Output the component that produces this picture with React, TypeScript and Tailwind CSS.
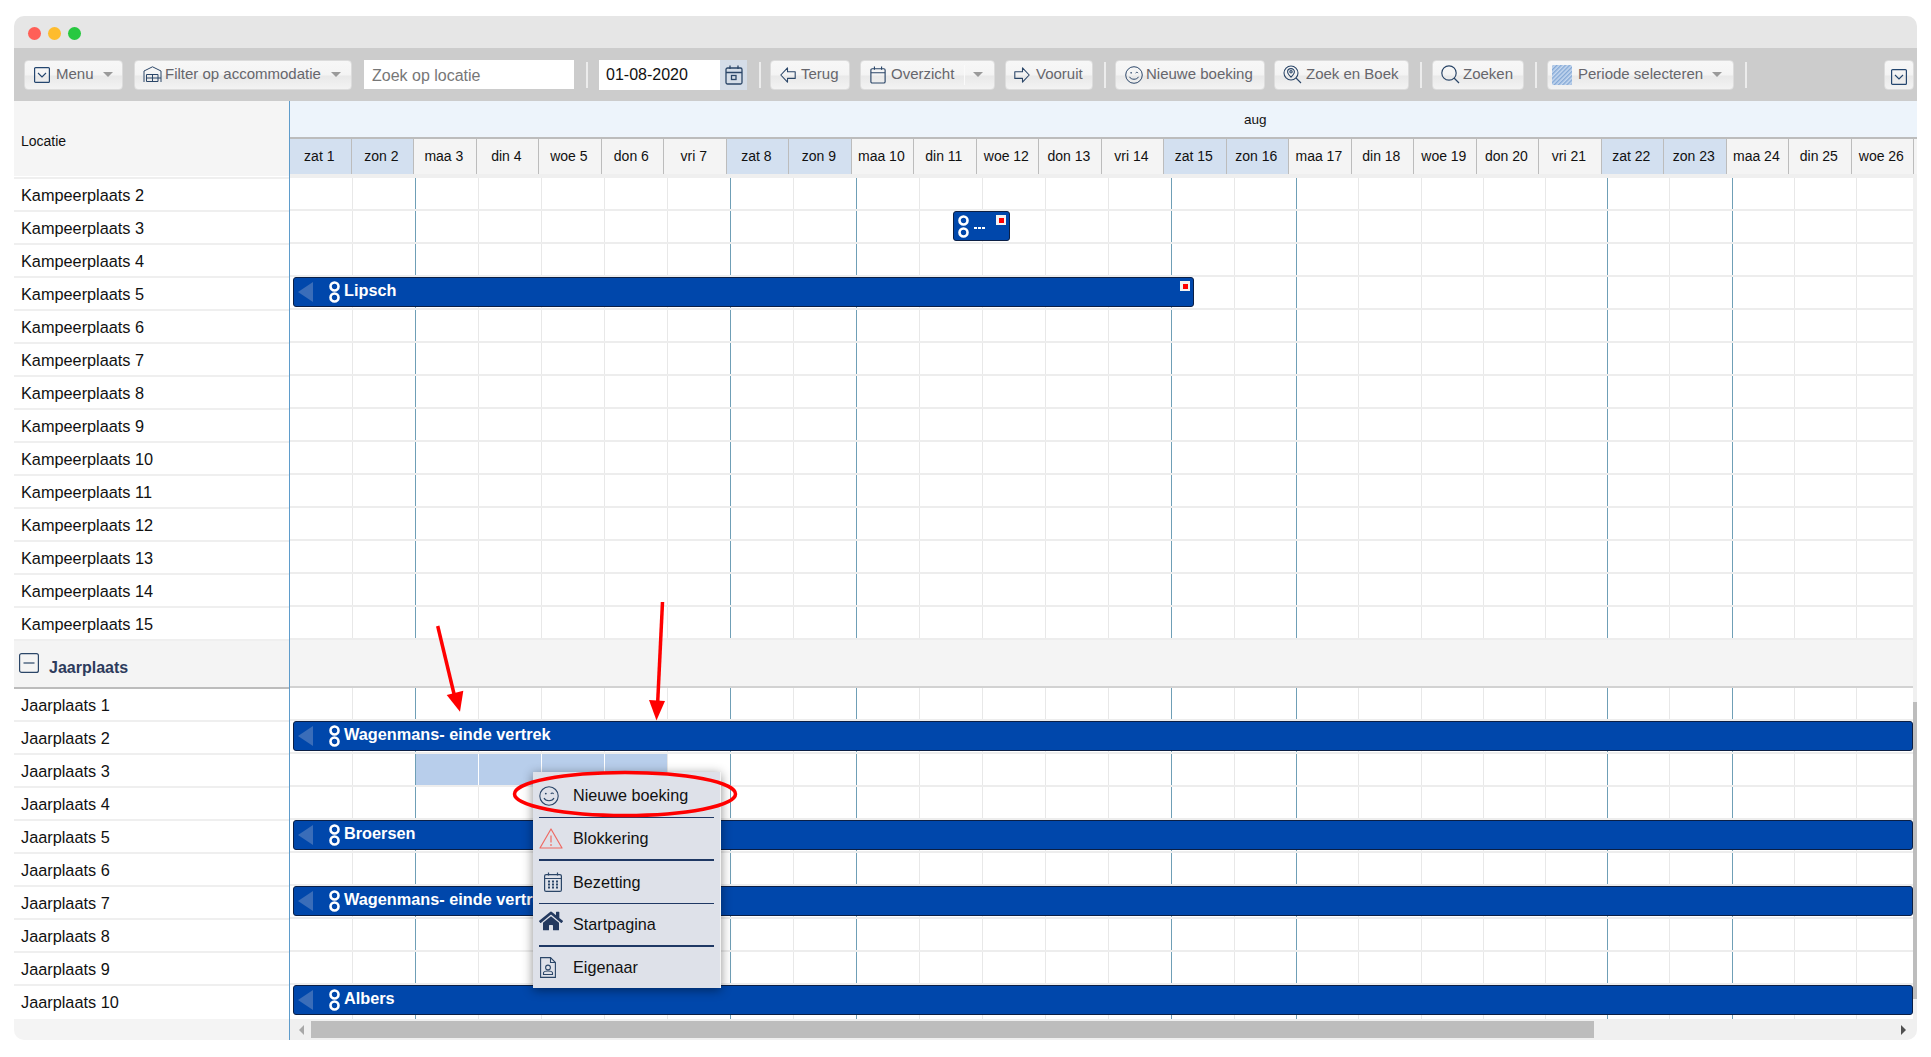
import { ReactNode } from 'react';
import { FaHome } from 'react-icons/fa';

const days = [
  'zat 1', 'zon 2', 'maa 3', 'din 4', 'woe 5', 'don 6', 'vri 7', 'zat 8', 'zon 9', 'maa 10', 'din 11', 'woe 12', 'don 13',
  'vri 14', 'zat 15', 'zon 16', 'maa 17', 'din 18', 'woe 19', 'don 20', 'vri 21', 'zat 22', 'zon 23', 'maa 24', 'din 25', 'woe 26',
];
const weekLines = [1, 6, 8, 13, 15, 20, 22];
const navy = '#2b4668';

const kampeer = Array.from({ length: 14 }, (_, i) => `Kampeerplaats ${i + 2}`);
const jaar = Array.from({ length: 10 }, (_, i) => `Jaarplaats ${i + 1}`);

function Rings({ small }: { small?: boolean }) {
  return (
    <svg width="13" height="25" viewBox="0 0 13 25" className={`shrink-0 ${small ? 'ml-[2px]' : 'ml-[30px]'}`}>
      <circle cx="6.5" cy="6.5" r="4" fill="none" stroke="#fff" strokeWidth="2.6" />
      <circle cx="6.5" cy={small ? 18.5 : 17.5} r="4" fill="none" stroke="#fff" strokeWidth="2.6" />
    </svg>
  );
}

function Marker() {
  return (
    <div className="absolute top-[3px] right-[3px] flex h-[10px] w-[10px] items-center justify-center bg-[#f2f2f2]">
      <div className="h-[5px] w-[5px] bg-[#ff0000]" />
    </div>
  );
}

function Bar({ label, pos, marker }: { label: string; pos: string; marker?: boolean }) {
  return (
    <div className={`absolute top-0 z-10 flex h-[30px] items-center overflow-hidden rounded-[3px] border border-[#0b1f45] bg-[#0047ab] pl-[4px] ${pos}`}>
      <svg width="15" height="20" viewBox="0 0 15 20" className="absolute left-[4px] top-[4px]">
        <path d="M15 0V20L0 10Z" fill="#3a6db9" />
      </svg>
      <Rings />
      <span className="-mt-[3px] ml-[3px] whitespace-nowrap text-[16.3px] font-bold leading-none text-white">{label}</span>
      {marker && <Marker />}
    </div>
  );
}

function GridRow({ selected, last, children }: { selected?: boolean; last?: boolean; children?: ReactNode }) {
  return (
    <div className={`relative grid w-[1630px] grid-cols-[repeat(15,63px)_repeat(11,62.2px)] ${last ? 'h-[34px]' : 'h-[33px] border-b-2 border-[#ededed]'}`}>
      {days.map((d, i) => {
        const isSel = selected && i >= 2 && i <= 5;
        const line = weekLines.includes(i) ? 'border-[#6f9fb6]' : isSel && i < 5 ? 'border-white' : 'border-[#e8e8e8]';
        return <div key={d} className={`border-r ${line} ${isSel ? 'bg-[#b8ceeb]' : ''}`} />;
      })}
      {children}
    </div>
  );
}

function NameRow({ name, last }: { name: string; last?: boolean }) {
  return (
    <div className={`flex h-[33px] items-center pl-[7px] text-[16.3px] text-[#111] ${last ? '' : 'border-b-2 border-[#efefef] pt-[2px]'}`}>
      {name}
    </div>
  );
}

function Btn({ className, children }: { className: string; children: ReactNode }) {
  return (
    <div className={`flex h-[30px] shrink-0 items-center rounded-[4px] border border-[#dcdcdc] bg-[linear-gradient(#f7f7f7_0%,#f4f4f4_48%,#e9e9e9_55%,#f3f3f3_100%)] text-[15px] text-[#66666c] ${className}`}>
      {children}
    </div>
  );
}

function Sep({ className }: { className: string }) {
  return <div className={`h-[26px] w-[2px] shrink-0 bg-[#ececec] ${className}`} />;
}

function Caret({ className }: { className: string }) {
  return (
    <svg width="10" height="5" viewBox="0 0 10 5" className={`shrink-0 ${className}`}>
      <path d="M0 0H10L5 5Z" fill="#9a9a9a" />
    </svg>
  );
}

function ChevronBox({ className }: { className: string }) {
  return (
    <svg width="16" height="16" viewBox="0 0 16 16" fill="none" className={`shrink-0 ${className}`}>
      <rect x="0.6" y="0.6" width="14.8" height="14.8" rx="1" stroke="#24466f" strokeWidth="1.2" />
      <path d="M4 6L8 10L12 6" stroke="#24466f" strokeWidth="1.1" />
    </svg>
  );
}

function CalendarIcon({ size, dot, className }: { size: number; dot?: boolean; className?: string }) {
  return (
    <svg width={size} height={size + 2} viewBox="0 0 18 20" fill="none" stroke={navy} strokeWidth="1.3" className={`shrink-0 ${className ?? ''}`}>
      <rect x="1" y="3" width="16" height="16" rx="1.5" />
      <path d="M1 7.5H17M5 0.5V4M13 0.5V4" />
      {dot && <rect x="6.5" y="10.5" width="4.5" height="4" />}
    </svg>
  );
}

function ArrowIcon({ flip, className }: { flip?: boolean; className?: string }) {
  return (
    <svg width="16" height="16" viewBox="0 0 16 16" fill="none" stroke={navy} strokeWidth="1.1" className={`shrink-0 ${flip ? '-scale-x-100' : ''} ${className ?? ''}`}>
      <path d="M7.5 0.8L0.8 8L7.5 15.2V11.4H15.2V4.8H7.5Z" strokeLinejoin="round" />
    </svg>
  );
}

function Smile({ size, className }: { size: number; className?: string }) {
  return (
    <svg width={size} height={size} viewBox="0 0 20 20" fill="none" stroke={navy} strokeWidth="1.1" className={`shrink-0 ${className ?? ''}`}>
      <circle cx="10" cy="10" r="9.2" />
      <circle cx="6.8" cy="7.6" r="0.9" fill={navy} stroke="none" />
      <path d="M11.8 7.8C12.6 6.8 13.8 6.8 14.6 7.8" />
      <path d="M5 12C6.5 15.6 13.5 15.6 15 12" />
    </svg>
  );
}

function Hatch() {
  return (
    <svg width="20" height="20" viewBox="0 0 20 20" className="ml-[4px] shrink-0">
      <defs>
        <pattern id="hatch" width="3" height="3" patternUnits="userSpaceOnUse" patternTransform="rotate(-45)">
          <rect width="3" height="3" fill="#c6d8ef" />
          <rect width="3" height="1.4" fill="#84a8d6" />
        </pattern>
      </defs>
      <rect width="20" height="20" rx="1.5" fill="url(#hatch)" />
    </svg>
  );
}

function MenuItem({ icon, label, sep }: { icon: ReactNode; label: string; sep?: string }) {
  return (
    <div className={`mx-[6px] flex flex-1 items-center text-[16.2px] text-[#111] ${sep ?? ''}`}>
      <div className="flex w-[34px] shrink-0 justify-start">{icon}</div>
      {label}
    </div>
  );
}

export default function App() {
  return (
    <div className="min-h-screen bg-white pl-[14px] pt-[16px] font-['Liberation_Sans',Arial,sans-serif]">
      <div className="relative h-[1024px] w-[1903px] overflow-hidden rounded-[10px]">
        {/* title bar */}
        <div className="flex h-[32px] items-center gap-[7px] bg-[#e6e6e6] pl-[14px] pt-[2px]">
          <div className="h-[13px] w-[13px] rounded-full bg-[#ff5f57]" />
          <div className="h-[13px] w-[13px] rounded-full bg-[#febc2e]" />
          <div className="h-[13px] w-[13px] rounded-full bg-[#28c840]" />
        </div>

        {/* toolbar */}
        <div className="flex h-[53px] items-center bg-[#cccccc] pl-[10px]">
          <Btn className="w-[99px] pl-[9px]">
            <ChevronBox className="mr-[6px]" />
            Menu
            <Caret className="ml-auto mr-[9px]" />
          </Btn>
          <Btn className="ml-[11px] w-[218px] pl-[8px]">
            <svg width="19" height="17" viewBox="0 0 19 17" fill="none" stroke={navy} strokeWidth="1" className="mr-[3px] shrink-0">
              <path d="M1 16V5L9.5 0.8L18 5V16" />
              <path d="M3.5 15.5V8.5H15V15.5H3.5ZM3.5 12H18M9.5 8.5V15.5" />
            </svg>
            Filter op accommodatie
            <Caret className="ml-auto mr-[10px]" />
          </Btn>
          <div className="ml-[12px] flex h-[29px] w-[210px] shrink-0 items-center bg-white pl-[8px] pt-[2px] text-[16px] text-[#777]">Zoek op locatie</div>
          <Sep className="ml-[12px]" />
          <div className="ml-[11px] flex h-[30px] w-[121px] shrink-0 items-center bg-white pl-[7px] text-[16px] text-[#111]">01-08-2020</div>
          <div className="flex h-[30px] w-[27px] shrink-0 items-center justify-center bg-[#d5dde8]">
            <CalendarIcon size={18} dot />
          </div>
          <Sep className="ml-[12px]" />
          <Btn className="ml-[9px] w-[80px] pl-[9px]">
            <ArrowIcon className="mr-[5px]" />
            Terug
          </Btn>
          <Btn className="ml-[10px] w-[135px] pl-[9px]">
            <CalendarIcon size={16} className="mr-[5px]" />
            Overzicht
            <div className="ml-[10px] h-[20px] w-px bg-[#fafafa]" />
            <Caret className="ml-[8px]" />
          </Btn>
          <Btn className="ml-[10px] w-[88px] pl-[8px]">
            <ArrowIcon flip className="mr-[6px]" />
            Vooruit
          </Btn>
          <Sep className="ml-[11px]" />
          <Btn className="ml-[9px] w-[150px] pl-[9px]">
            <Smile size={18} className="mr-[3px]" />
            Nieuwe boeking
          </Btn>
          <Btn className="ml-[9px] w-[135px] pl-[8px]">
            <svg width="19" height="19" viewBox="0 0 19 19" fill="none" stroke={navy} strokeWidth="1.1" className="mr-[4px] shrink-0">
              <circle cx="8" cy="8" r="7" />
              <path d="M13 13L18 18" />
              <path d="M8 3.6C5.8 3.6 4.6 5.2 4.6 6.8C4.6 8.8 7 11.2 8 12.2C9 11.2 11.4 8.8 11.4 6.8C11.4 5.2 10.2 3.6 8 3.6Z" />
              <circle cx="8" cy="6.8" r="1.2" />
            </svg>
            Zoek en Boek
          </Btn>
          <Sep className="ml-[11px]" />
          <Btn className="ml-[10px] w-[92px] pl-[8px]">
            <svg width="19" height="19" viewBox="0 0 19 19" fill="none" stroke={navy} strokeWidth="1.2" className="mr-[3px] shrink-0">
              <circle cx="8" cy="8" r="7.2" />
              <path d="M13 13L18 18" />
            </svg>
            Zoeken
          </Btn>
          <Sep className="ml-[11px]" />
          <Btn className="ml-[10px] w-[187px]">
            <Hatch />
            <span className="ml-[6px]">Periode selecteren</span>
            <Caret className="ml-auto mr-[11px]" />
          </Btn>
          <Sep className="ml-[11px]" />
          <Btn className="ml-auto mr-[3px] w-[30px] pl-[6px] pt-[4px]">
            <ChevronBox className="" />
          </Btn>
        </div>

        <div className="flex">
          {/* location column */}
          <div className="w-[275px] shrink-0">
            <div className="flex h-[75px] items-center bg-[#f5f5f5] pl-[7px] pt-[6px] text-[14px] text-[#111]">Locatie</div>
            <div className="h-[3px] border-b-2 border-[#efefef]" />
            {kampeer.map((n) => (
              <NameRow key={n} name={n} />
            ))}
            <div className="flex h-[48px] items-center border-b-2 border-[#bcbcbc] bg-[#f4f4f4] pl-[5px]">
              <svg width="20" height="20" viewBox="0 0 20 20" fill="none" stroke={navy} strokeWidth="1.2" className="-mt-[2px] shrink-0">
                <rect x="0.6" y="0.6" width="18.8" height="18.8" rx="2" />
                <path d="M4.5 10H15.5" />
              </svg>
              <span className="ml-[10px] mt-[7px] text-[16px] font-bold text-[#2d3b5c]">Jaarplaats</span>
            </div>
            {jaar.map((n, i) => (
              <NameRow key={n} name={n} last={i === 9} />
            ))}
            <div className="h-[21px] bg-[#f4f4f4]" />
          </div>

          {/* planning */}
          <div className="min-w-0 flex-1 border-l border-[#5f9ccb]">
            <div className="h-[36px] bg-[#edf4fb] pl-[954px] pt-[10px] text-[13.5px] leading-[18px] text-[#111]">aug</div>
            <div className="grid h-[37px] grid-cols-[61.6px_repeat(25,62.5px)] border-t-2 border-[#bcbcbc] bg-[#f4f4f4]">
              {days.map((d) => (
                <div
                  key={d}
                  className={`flex items-center justify-center whitespace-nowrap border-r border-[#bcbcbc] pr-[2px] text-[14px] text-[#111] ${/^z/.test(d) ? 'bg-[#d3e0f0]' : ''}`}
                >
                  {d}
                </div>
              ))}
            </div>
            <div className="flex">
              <div className="min-w-0 flex-1 overflow-hidden">
                <div className="h-[4px] bg-[#efefef]" />
                {kampeer.map((n, i) => (
                  <GridRow key={n}>
                    {i === 1 && (
                      <div className="absolute left-[663px] top-0 z-10 flex h-[30px] w-[57px] items-center rounded-[3px] border border-[#0b1f45] bg-[#0047ab] pl-[1px]">
                        <Rings small />
                        <span className="ml-[4px] mt-[3px] flex gap-[1.5px]">
                          <span className="h-[2px] w-[2.5px] bg-white" />
                          <span className="h-[2px] w-[2.5px] bg-white" />
                          <span className="h-[2px] w-[2.5px] bg-white" />
                        </span>
                        <Marker />
                      </div>
                    )}
                    {i === 3 && <Bar label="Lipsch" pos="left-[3px] w-[901px]" marker />}
                  </GridRow>
                ))}
                <div className="h-[48px] border-b-2 border-[#d2d2d2] bg-[#f4f4f4]" />
                {jaar.map((n, i) => (
                  <GridRow key={n} selected={i === 2} last={i === 9}>
                    {i === 1 && <Bar label="Wagenmans- einde vertrek" pos="left-[3px] w-[1620px]" />}
                    {i === 4 && <Bar label="Broersen" pos="left-[3px] w-[1620px]" />}
                    {i === 6 && <Bar label="Wagenmans- einde vertrek" pos="left-[3px] w-[1620px]" />}
                    {i === 9 && <Bar label="Albers" pos="left-[3px] w-[1620px]" />}
                  </GridRow>
                ))}
              </div>
              <div className="w-[4px] shrink-0 bg-[#f0f0f0]">
                <div className="mt-[528px] h-[297px] bg-[#bdbdbd]" />
              </div>
            </div>
            <div className="flex h-[21px] items-center bg-[#f0f0f0] pl-[9px]">
              <svg width="5" height="10" viewBox="0 0 5 10" className="shrink-0">
                <path d="M5 0V10L0 5Z" fill="#a8a8a8" />
              </svg>
              <div className="ml-[7px] h-[17px] w-[1283px] bg-[#bdbdbd]" />
              <svg width="5" height="10" viewBox="0 0 5 10" className="ml-auto mr-[11px] shrink-0">
                <path d="M0 0V10L5 5Z" fill="#505050" />
              </svg>
            </div>
          </div>
        </div>

        {/* context menu */}
        <div className="absolute left-[519px] top-[756px] z-20 flex h-[216px] w-[188px] flex-col border-r border-[#f4f4f4] bg-[#dee1e9] shadow-[0_2px_10px_rgba(0,0,0,0.45)]">
          <MenuItem
            label="Nieuwe boeking"
            sep="border-b border-[#1f3864] min-h-[46px] pt-[2px]"
            icon={<Smile size={20} />}
          />
          <MenuItem
            label="Blokkering"
            sep="border-b-2 border-[#1f3864]"
            icon={
              <svg width="24" height="21" viewBox="0 0 24 21" fill="none" stroke="#ee6a63" strokeWidth="1.2">
                <path d="M12 1L23 20H1Z" strokeLinejoin="round" />
                <path d="M12 7.5V14.5M12 16V18" />
              </svg>
            }
          />
          <MenuItem
            label="Bezetting"
            sep="border-b border-[#1f3864]"
            icon={
              <svg width="18" height="20" viewBox="0 0 18 20" fill="none" stroke={navy} strokeWidth="1.2" className="ml-[5px]">
                <rect x="0.6" y="2.6" width="16.8" height="16.8" rx="1.5" />
                <path d="M0.6 6.5H17.4M4.5 0.5V3.5M13.5 0.5V3.5" />
                <path d="M4 9.5H6M8 9.5H10M12 9.5H14M4 12.5H6M8 12.5H10M12 12.5H14M4 15.5H6M8 15.5H10M12 15.5H14" strokeWidth="1.8" />
              </svg>
            }
          />
          <MenuItem
            label="Startpagina"
            sep="border-b-2 border-[#1f3864]"
            icon={<FaHome size={24} color="#23395f" className="-mt-[6px]" />}
          />
          <MenuItem
            label="Eigenaar"
            icon={
              <svg width="16" height="21" viewBox="0 0 16 21" fill="none" stroke={navy} strokeWidth="1.1" className="ml-[1px]">
                <path d="M0.6 0.6H10.5L15.4 5.5V20.4H0.6Z" />
                <path d="M10.5 0.6V5.5H15.4" />
                <circle cx="8" cy="10.5" r="2.4" />
                <path d="M3.5 17.5V16C3.5 14.5 5 14 8 14C11 14 12.5 14.5 12.5 16V17.5Z" />
              </svg>
            }
          />
        </div>

        {/* annotations */}
        <svg width="1903" height="1024" viewBox="0 0 1903 1024" fill="none" className="pointer-events-none absolute left-0 top-0 z-30">
          <ellipse cx="611" cy="778" rx="110.5" ry="21.5" stroke="#ff0000" strokeWidth="3.5" />
          <path d="M423.7 610L441 682" stroke="#ff0000" strokeWidth="3.5" />
          <path d="M432.7 679L449.3 674.7L446 695.7Z" fill="#ff0000" />
          <path d="M648.5 586L643.5 690" stroke="#ff0000" strokeWidth="3.5" />
          <path d="M635 684L651 685L642.5 704.5Z" fill="#ff0000" />
        </svg>
      </div>
    </div>
  );
}
